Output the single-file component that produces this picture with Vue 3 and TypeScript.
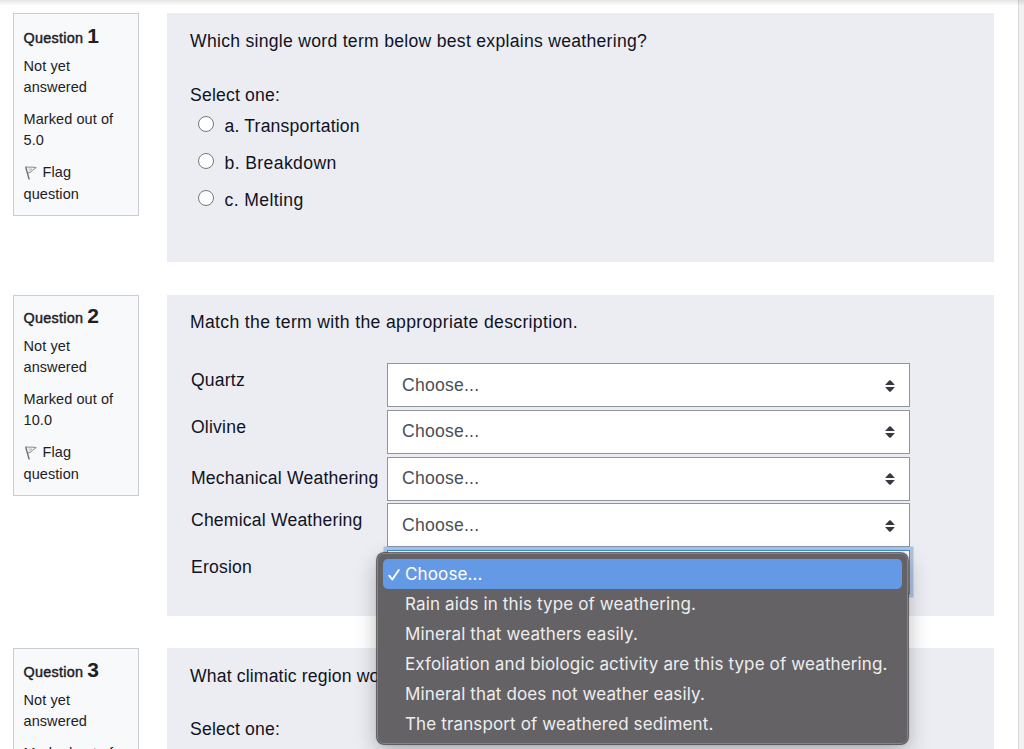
<script setup lang="ts">
interface Info { number: number; marks: string; kind: string }

const infos: Info[] = [
  { number: 1, marks: '5.0', kind: 'first' },
  { number: 2, marks: '10.0', kind: 'second' },
  { number: 3, marks: '5.0', kind: 'third' },
]
const answers: string[] = ['a. Transportation', 'b. Breakdown', 'c. Melting']
const terms: string[] = ['Quartz', 'Olivine', 'Mechanical Weathering', 'Chemical Weathering', 'Erosion']
const options: string[] = [
  'Choose...',
  'Rain aids in this type of weathering.',
  'Mineral that weathers easily.',
  'Exfoliation and biologic activity are this type of weathering.',
  'Mineral that does not weather easily.',
  'The transport of weathered sediment.',
]
</script>

<template>
  <div class="page">
    <main class="quiz">
      <section v-for="q in infos" :key="q.number" class="question" :class="q.kind">
        <aside class="info">
          <h3 class="heading"><span class="label">Question</span><span class="number">{{ q.number }}</span></h3>
          <p>Not yet<br />answered</p>
          <p>Marked out of<br />{{ q.marks }}</p>
          <p>
            <svg class="flag" viewBox="0 0 13 14">
              <path d="M1.700 1 5.200 13.500" fill="none" stroke="#707070" stroke-width="1.400" />
              <path d="M1.200.9C4.600 1.500 7.500.8 12.200 1.500 9.500 3 7.800 6.400 3.600 7.300" fill="none" stroke="#858585" stroke-width="1" />
              <path d="M4.200 3.200 8.200 3 4.900 5.400" fill="none" stroke="#999" stroke-width=".6" />
            </svg>Flag<br />question
          </p>
        </aside>

        <div v-if="q.number === 1" class="content">
          <p class="text prompt1">Which single word term below best explains weathering?</p>
          <p class="text select-one">Select one:</p>
          <label v-for="a in answers" :key="a" class="answer">
            <span class="radio"></span><span class="text">{{ a }}</span>
          </label>
        </div>

        <div v-else-if="q.number === 2" class="content">
          <p class="text prompt2">Match the term with the appropriate description.</p>
          <div class="matches">
            <div v-for="(t, i) in terms" :key="t" class="match">
              <span class="text term" :class="{ low: i === 2 }">{{ t }}</span>
              <div class="select" :class="{ focus: i === 4 }">
                <template v-if="i !== 4">
                  <span class="value">Choose...</span>
                  <svg class="arrows" viewBox="0 0 10 12">
                    <path d="M.3 5Q.3 4.500 1 3.900L4.200.6Q5 0 5.800.6L9 3.900Q9.700 4.500 9.700 5ZM.3 7Q.3 7.500 1 8.100L4.200 11.400Q5 12 5.800 11.400L9 8.100Q9.700 7.500 9.700 7Z" fill="#343a40" />
                  </svg>
                </template>
              </div>
            </div>
          </div>
        </div>

        <div v-else class="content">
          <p class="text prompt3">What climatic region wo</p>
          <p class="text select-one">Select one:</p>
        </div>
      </section>
    </main>
    <div class="gutter"></div>
    <div class="top-shade"></div>

    <div class="menu">
      <div v-for="(o, i) in options" :key="o" class="option" :class="{ active: i === 0 }">
        <span class="mark">
          <svg v-if="i === 0" viewBox="0 0 12 13">
            <path d="M1.200 7.700 4.300 11.500 10.800 2" fill="none" stroke="#fff" stroke-width="1.900" stroke-linecap="round" stroke-linejoin="round" />
          </svg>
        </span>
        <span>{{ o }}</span>
      </div>
    </div>
  </div>
</template>

<style>
html, body { overflow: hidden; background: #fff; }
</style>

<style scoped>
* { box-sizing: border-box; }
p, h3 { margin: 0; }
.page {
  position: relative;
  display: flex;
  width: 1024px;
  height: 749px;
  overflow: hidden;
  font-family: "Liberation Sans", Arial, sans-serif;
  color: #1d2125;
}
.quiz { width: 1018px; padding: 13px 24px 0 13px; }
.gutter { width: 6px; background: #f1f1f1; border-left: 1px solid #d9d9d9; }
.top-shade {
  position: absolute;
  inset: 0 0 auto;
  height: 6px;
  background: linear-gradient(rgba(0, 0, 0, .1), rgba(0, 0, 0, 0));
}
.question { display: flex; align-items: flex-start; gap: 28px; }
.first { height: 282px; }
.second { height: 353px; }
.third { height: 250px; }
.info {
  width: 126px;
  height: 203px;
  padding: 10px 0 0 9.500px;
  background: #f8f9fb;
  border: 1px solid #cacdd3;
  font-size: 14.500px;
  letter-spacing: .08px;
  line-height: 21.500px;
}
.second .info { height: 201px; padding-top: 8px; }
.third .info { padding-top: 9px; }
.info p { margin-bottom: 10.300px; white-space: nowrap; }
.heading {
  display: flex;
  align-items: baseline;
  gap: 4px;
  height: 24px;
  margin-bottom: 7.700px;
  line-height: 24px;
}
.label {
  font-weight: 400;
  font-size: 14.400px;
  letter-spacing: .28px;
  -webkit-text-stroke: .45px #1d2125;
}
.number { font-size: 21px; letter-spacing: 0; }
.flag { width: 13px; height: 14px; margin-right: 6px; vertical-align: -3px; }
.content { width: 827px; padding-left: 23px; background: #ecedf3; color: #10131f; }
.first .content { height: 249px; padding-top: 16px; }
.second .content { height: 321px; padding-top: 15px; }
.third .content { height: 240px; padding-top: 16px; }
.text { font-size: 17.600px; line-height: 24px; letter-spacing: .19px; white-space: nowrap; }
.prompt1 { letter-spacing: .28px; }
.prompt2 { letter-spacing: .34px; }
.prompt3 { letter-spacing: .16px; }
.select-one { margin-top: 30px; }
.third .select-one { margin-top: 29px; }
.answer { display: flex; align-items: flex-start; height: 37px; padding: 9px 0 0 7.500px; }
.radio {
  width: 16px;
  height: 16px;
  margin: 0 11px 0 0;
  border: 1px solid #777;
  border-radius: 50%;
  background: #fff;
}
.answer .text { line-height: 20px; }
.answer:not(:nth-of-type(1)) .text { letter-spacing: .38px; }
.matches { margin-top: 29px; }
.match { display: flex; height: 46.750px; }
.term { width: 197px; padding: 5px 0 0 1px; }
.term.low { padding-top: 9px; }
.select {
  display: flex;
  align-items: center;
  justify-content: space-between;
  width: 523px;
  height: 44px;
  padding: 0 14px;
  border: 1px solid #8f949e;
  background: #fff;
  color: #495057;
}
.select.focus { border-color: #3b8fe0; box-shadow: 0 0 0 3.500px rgba(120, 160, 208, .52); }
.value { font-size: 17.600px; letter-spacing: .22px; }
.arrows { width: 10px; height: 12px; margin-top: 1px; }
.menu {
  position: absolute;
  left: 377px;
  top: 553px;
  width: 531px;
  height: 191px;
  padding: 5px;
  border: 1px solid #858487;
  border-radius: 7px;
  background: #646265;
  box-shadow: 0 0 0 .5px #444, 0 0 1px 1px rgba(0, 0, 0, .4), 0 8px 22px rgba(0, 0, 0, .28);
}
.option {
  display: flex;
  align-items: center;
  height: 30px;
  padding-left: 5px;
  border-radius: 5px;
  color: #eee;
  font-family: Inter, sans-serif;
  font-size: 17px;
  letter-spacing: .13px;
  white-space: nowrap;
}
.option.active { background: #649ae5; color: #fff; }
.mark { width: 17px; }
.mark svg { display: block; width: 12px; height: 13px; }
</style>
